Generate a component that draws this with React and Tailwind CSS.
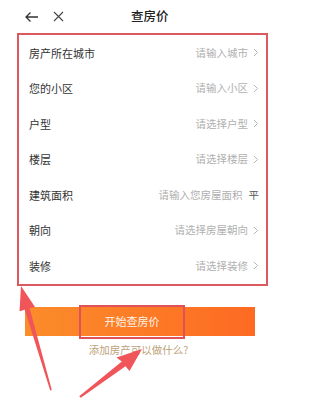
import React from 'react';

const rows = [
  { label: '房产所在城市', hint: '请输入城市' },
  { label: '您的小区', hint: '请输入小区' },
  { label: '户型', hint: '请选择户型' },
  { label: '楼层', hint: '请选择楼层' },
  { label: '建筑面积', hint: '请输入您房屋面积', unit: '平' },
  { label: '朝向', hint: '请选择房屋朝向' },
  { label: '装修', hint: '请选择装修' },
];

function Chevron() {
  return (
    <svg width="6" height="9" viewBox="0 0 6 9" className="ml-[5px]">
      <path d="M1 1l3.5 3.5L1 8" fill="none" stroke="#b5b5b5" strokeWidth="1" />
    </svg>
  );
}

export default function App() {
  return (
    <div className="relative w-[280px] h-[416px] bg-white overflow-hidden" style={{ fontFamily: '"Noto Sans CJK SC", "Noto Sans", sans-serif' }}>
      <div className="flex items-center h-[33px] pl-[24px]">
        <svg width="15" height="12" viewBox="0 0 15 12">
          <path d="M14 6H2M6.5 1.5L2 6l4.5 4.5" fill="none" stroke="#333" strokeWidth="1.3" />
        </svg>
        <svg width="11" height="11" viewBox="0 0 11 11" className="ml-[14px]">
          <path d="M1 1l9 9M10 1l-9 9" fill="none" stroke="#444" strokeWidth="1.1" />
        </svg>
        <div className="ml-[67px] text-[12.5px] text-[#222] font-medium">查房价</div>
      </div>

      <div className="mx-[17px] w-[251px] border-2 border-[#dc5a5f]">
        {rows.map((r) => (
          <div key={r.label} className="flex items-center justify-between h-[35.5px] pl-[10px] pr-[7px]">
            <span className="text-[11px] text-[#333]">{r.label}</span>
            <span className="flex items-center text-[10.5px] text-[#b0b0b0]">
              {r.hint}
              {r.unit ? <span className="ml-[6px] text-[#555]">{r.unit}</span> : <Chevron />}
            </span>
          </div>
        ))}
      </div>

      <div className="mt-[21px] mx-[25px] h-[29px] bg-gradient-to-r from-[#fb8c2b] to-[#fd6a22] flex justify-center">
        <div className="mt-[-2px] ml-[-16px] w-[106px] h-[34px] border-2 border-[#e0525a] flex items-center justify-center text-[11px] text-[#fff3e6]">
          开始查房价
        </div>
      </div>
      <div className="mt-[6px] text-center text-[10.5px] text-[#bda27a] pr-[3px]">添加房产可以做什么?</div>

      <svg className="absolute left-0 top-0" width="280" height="416" viewBox="0 0 280 416">
        <polygon points="21,286 35,307 29.6,308.3 51.8,390 50.2,390.4 24.8,309.7 19.5,311.2" fill="#f0555a" />
        <polygon points="142,349 129.5,371 125.5,366.2 80.8,397.8 79.2,396.2 121.8,361.6 116.5,357.5" fill="#f0555a" />
      </svg>
    </div>
  );
}
